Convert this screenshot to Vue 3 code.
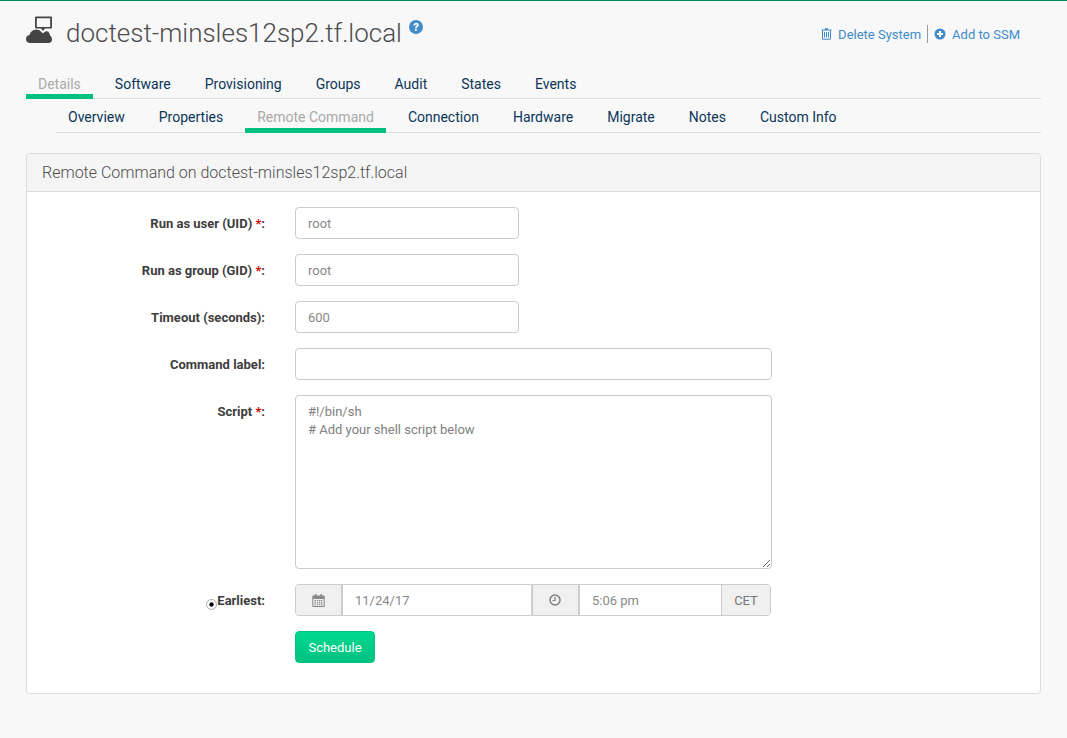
<template>
  <div class="page">
    <!-- Header -->
    <header class="toolbar">
      <h1 class="title">
        <svg class="system-icon" viewBox="0 0 28 28" width="28" height="28">
          <path fill="#444" fill-rule="evenodd" d="M10 0.500h15q1 0 1 1v10q0 1-1 1h-6l-2 2.500-2-2.500H10q-1 0-1-1v-10q0-1 1-1zM10.800 2.300v8.700h13.400V2.300z" />
          <path fill="#444" d="M4.500 27Q0 27 0 23 0 19.500 3.500 19 4.500 14 10.500 13.500 14 13.500 15.500 16L17 17.500 18.500 16Q20 15 22 15.500 24 17 24 19.500 26 20.500 26 23.500 26 27 22 27z" />
        </svg>
        <span>doctest-minsles12sp2.tf.local</span>
        <svg class="help-icon" viewBox="0 0 14 14" width="14" height="14">
          <circle cx="7" cy="7" r="7" fill="#428bca" />
          <path d="M4.300 5.300Q4.600 2.700 7.100 2.700 9.800 2.800 9.800 5 9.800 6.300 8.500 7 7.800 7.400 7.800 8.200H6Q5.900 6.700 7.200 6 8 5.600 8 5 8 4.400 7.100 4.400 6.200 4.400 6 5.500z" fill="#fff" />
          <rect x="6" y="9" width="1.800" height="1.800" fill="#fff" />
        </svg>
      </h1>
      <div class="toolbar-actions">
        <a class="action">
          <svg viewBox="0 0 11 12" width="11" height="12">
            <path fill="#428bca" fill-rule="evenodd" d="M3.500 1.500L4.300 0.300h2.400L7.500 1.500H10.500v1H10v8q0 1.200-1 1.200H2q-1 0-1-1.200v-8H0.500v-1zM2 2.500v8q0 .2.200.2h6.600q.2 0 .2-.2v-8zM3 4h1v5.500H3zM5 4h1v5.500H5zM7 4h1v5.500H7z" />
          </svg>
          Delete System
        </a>
        <span class="action-sep"></span>
        <a class="action">
          <svg viewBox="0 0 12 12" width="12" height="12">
            <circle cx="6" cy="6" r="5.500" fill="#428bca" />
            <path d="M5 3h2v2h2v2H7v2H5V7H3V5h2z" fill="#fff" />
          </svg>
          Add to SSM
        </a>
      </div>
    </header>

    <!-- Tabs -->
    <nav class="tabs">
      <a v-for="t in mainTabs" :key="t" class="tab" :class="{ active: t === 'Details' }">{{ t }}</a>
    </nav>
    <nav class="tabs sub">
      <a v-for="t in subTabs" :key="t" class="tab" :class="{ active: t === 'Remote Command' }">{{ t }}</a>
    </nav>

    <!-- Panel -->
    <section class="panel">
      <div class="panel-heading">Remote Command on doctest-minsles12sp2.tf.local</div>
      <form class="panel-body" @submit.prevent>
        <div class="row">
          <label class="label">Run as user (UID) <em>*</em>:</label>
          <input class="input short" placeholder="root" />
        </div>
        <div class="row">
          <label class="label">Run as group (GID) <em>*</em>:</label>
          <input class="input short" placeholder="root" />
        </div>
        <div class="row">
          <label class="label">Timeout (seconds):</label>
          <input class="input short" placeholder="600" />
        </div>
        <div class="row">
          <label class="label">Command label:</label>
          <input class="input wide" />
        </div>
        <div class="row">
          <label class="label">Script <em>*</em>:</label>
          <textarea class="input wide script" :value="script"></textarea>
        </div>
        <div class="row">
          <label class="label earliest"><input type="radio" class="radio" checked />Earliest:</label>
          <div class="picker">
            <span class="addon icon-addon">
              <svg viewBox="0 0 13 13" width="13" height="13">
                <path fill="#888" fill-rule="evenodd" d="M3 0h1.500v1.500h4V0H10v1.500h2q.7 0 .7.700V12.300q0 .7-.7.700H1q-.7 0-.7-.7V2.200q0-.7.700-.7h2zM1.300 5v7h10.400V5zM2.500 6H4v1.300H2.500zM5 6h1.300v1.300H5zM7 6h1.300v1.300H7zM9 6h1.500v1.300H9zM2.500 8.200H4v1.300H2.500zM5 8.200h1.300v1.300H5zM7 8.200h1.300v1.300H7zM9 8.200h1.500v1.300H9zM2.500 10.300H4v1H2.500zM5 10.300h1.300v1H5zM7 10.300h1.300v1H7zM9 10.300h1.500v1H9z" />
              </svg>
            </span>
            <input class="picker-field date" value="11/24/17" />
            <span class="addon icon-addon clock">
              <svg viewBox="0 0 12 12" width="12" height="12">
                <circle cx="6" cy="6" r="5" fill="none" stroke="#808080" stroke-width="1.500" />
                <path d="M6 3v3.500H3.500" fill="none" stroke="#808080" stroke-width="1.200" />
              </svg>
            </span>
            <input class="picker-field time" value="5:06 pm" />
            <span class="addon tz">CET</span>
          </div>
        </div>
        <div class="row submit">
          <button class="btn-schedule">Schedule</button>
        </div>
      </form>
    </section>
  </div>
</template>

<script setup>
const mainTabs = ['Details', 'Software', 'Provisioning', 'Groups', 'Audit', 'States', 'Events']
const subTabs = ['Overview', 'Properties', 'Remote Command', 'Connection', 'Hardware', 'Migrate', 'Notes', 'Custom Info']
const script = '#!/bin/sh\n# Add your shell script below'
</script>

<style>
html,
body {
  margin: 0;
  background: #f8f8f8;
}
</style>

<style scoped>
.page {
  height: 738px;
  box-sizing: border-box;
  overflow: hidden;
  border-top: 1px solid #00885a;
  padding: 0 26px;
  background: #f8f8f8;
  font-family: Roboto, sans-serif;
  font-size: 14px;
  color: #333;
}

/* Header */
.toolbar {
  display: flex;
  justify-content: space-between;
  height: 72px;
}

.title {
  display: flex;
  align-items: flex-start;
  margin: 0;
  padding-top: 15px;
  font-size: 26px;
  line-height: 34px;
  font-weight: 300;
  color: #4d4d4d;
}

.system-icon {
  margin-right: 12px;
}

.help-icon {
  margin: 4px 0 0 7px;
}

.toolbar-actions {
  display: flex;
  align-items: center;
  height: 22px;
  margin: 22px 21px 0 0;
  font-size: 13px;
  color: #428bca;
}

.action {
  display: flex;
  align-items: center;
  gap: 6px;
}

.action-sep {
  width: 1px;
  height: 18px;
  margin: 0 6px 0 6px;
  background: #999;
}

/* Tabs */
.tabs {
  display: flex;
  gap: 10px;
  height: 25px;
  border-bottom: 1px solid #ddd;
}

.tabs.sub {
  margin-left: 30px;
  height: 33px;
  gap: 10px;
}

.tab {
  padding: 3px 12px 0;
  line-height: 17px;
  color: #0b3558;
}

.tabs.sub .tab {
  padding-top: 10px;
}

.tab.active {
  color: #aaa;
  border-bottom: 5px solid #00c081;
  margin-bottom: -1px;
}

/* Panel */
.panel {
  margin-top: 20px;
  border: 1px solid #ddd;
  border-radius: 4px;
  background: #fff;
}

.panel-heading {
  height: 38px;
  box-sizing: border-box;
  padding: 10px 15px;
  font-size: 16px;
  line-height: 17px;
  font-weight: 300;
  color: #4d4d4d;
  background: #f5f5f5;
  border-bottom: 1px solid #ddd;
  border-radius: 4px 4px 0 0;
}

.panel-body {
  padding: 15px 0 30px;
}

.row {
  display: flex;
  margin-bottom: 15px;
}

.row.submit {
  margin: 0;
}

.label {
  width: 238px;
  padding-top: 9px;
  text-align: right;
  font-size: 13px;
  line-height: 15px;
  font-weight: 700;
  margin-right: 30px;
  color: #3d3d3d;
}

.label em {
  font-style: normal;
  color: #c00;
}

.label.earliest {
  display: flex;
  justify-content: flex-end;
  align-items: center;
  height: 15px;
}

.radio {
  appearance: none;
  box-sizing: border-box;
  flex: none;
  width: 11px;
  height: 11px;
  margin: 8px 0 0 0;
  border: 1px solid #aaa;
  border-radius: 50%;
  background: radial-gradient(circle, #000 1.800px, #fff 2.500px);
}

.input {
  box-sizing: border-box;
  height: 32px;
  padding: 6px 12px;
  border: 1px solid #ccc;
  border-radius: 4px;
  font-family: Roboto, sans-serif;
  font-size: 13px;
  line-height: 18px;
  color: #808080;
  background: #fff;
  outline: none;
}

.input::placeholder {
  color: #888;
  opacity: 1;
}

.short {
  width: 224px;
}

.wide {
  width: 477px;
}

.script {
  height: 174px;
  display: block;
  padding-top: 7px;
}

/* Date picker */
.picker {
  display: flex;
  width: 476px;
  height: 32px;
  box-sizing: border-box;
  border: 1px solid #ccc;
  border-radius: 4px;
  overflow: hidden;
}

.addon {
  display: flex;
  align-items: center;
  justify-content: center;
  box-sizing: border-box;
  background: #f0f0f0;
  font-size: 13px;
  color: #777;
}

.icon-addon {
  width: 47px;
  border-right: 2px solid #ccc;
}

.clock svg {
  margin-left: -2px;
}

.tz {
  flex: 1;
  border-left: 1px solid #ccc;
}

.picker-field {
  box-sizing: border-box;
  border: 0;
  outline: none;
  padding: 0 12px;
  background: #fff;
  font-family: Roboto, sans-serif;
  font-size: 13px;
  color: #888;
}

.picker-field.date {
  width: 190px;
  border-right: 2px solid #ccc;
}

.picker-field.time {
  width: 141px;
}

.btn-schedule {
  width: 80px;
  height: 32px;
  border: 1px solid #00c382;
  border-radius: 4px;
  background: linear-gradient(#00d98f, #00c081);
  color: #fff;
  font-family: Roboto, sans-serif;
  font-size: 13px;
  margin-left: 268px;
}
</style>
